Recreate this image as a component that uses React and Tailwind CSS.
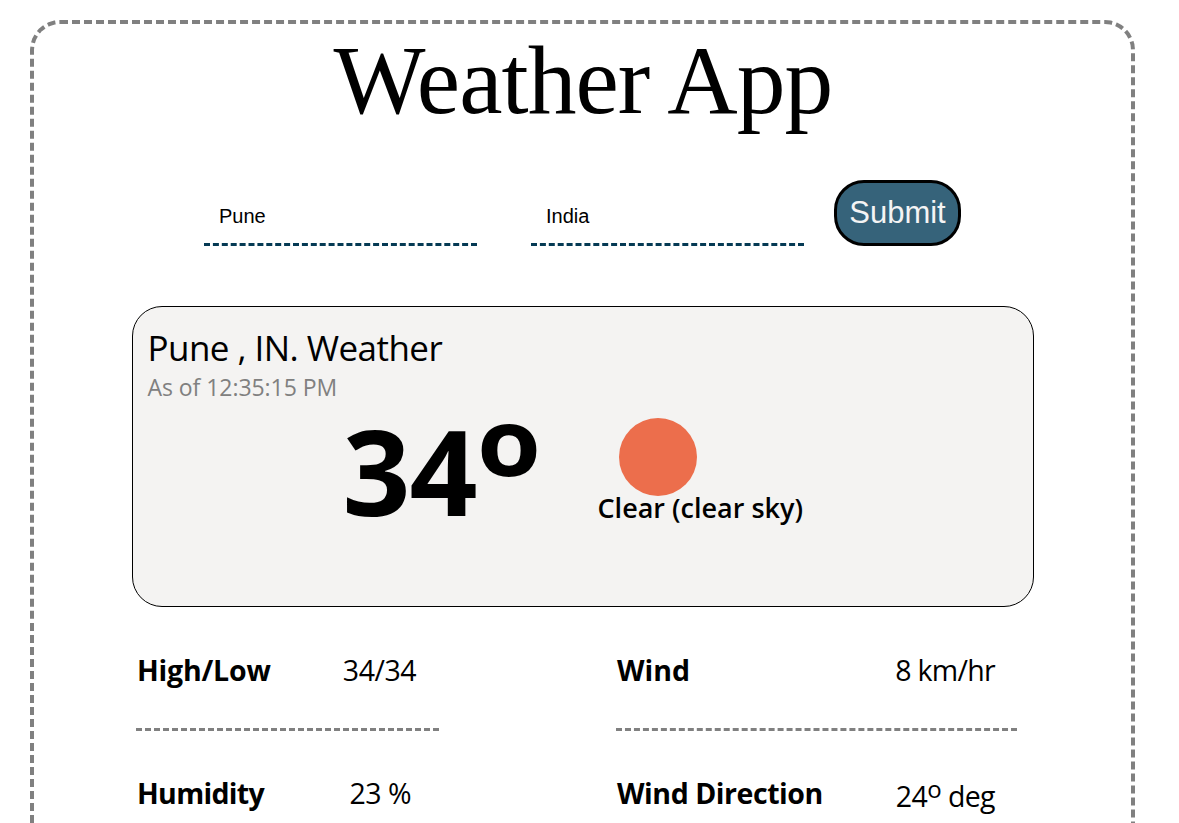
const sans = "font-['Open_Sans',sans-serif]";

function Field({ value, label }) {
  return (
    <input
      type="text"
      aria-label={label}
      defaultValue={value}
      className="h-[60px] w-[273px] border-b-3 border-dashed border-[#053a54] px-[15px] pt-[3px] font-['Liberation_Sans',sans-serif] text-[20px] outline-none"
    />
  );
}

function Stat({ label, children, className, labelClass, valueClass }) {
  return (
    <div className={`flex h-[123px] justify-between border-b-3 border-dashed border-[#808080] ${className}`}>
      <span className={`pt-[42px] pl-px text-[28.5px] leading-[40px] font-bold whitespace-nowrap ${labelClass}`}>{label}</span>
      <span className={`text-[28.5px] leading-[40px] font-normal whitespace-nowrap ${valueClass}`}>{children}</span>
    </div>
  );
}

export default function App() {
  return (
    <div className="h-[823px] w-[1179px] overflow-hidden bg-white pt-[20px] pl-[30px] text-black">
      <main className="flex h-[1100px] w-[1105px] flex-col items-center rounded-[30px] border-4 border-dashed border-[#808080]">
        <h1 className="mt-px mb-px pl-px font-['Liberation_Serif',serif] text-[97.5px] leading-[110px] tracking-[-0.95px]">Weather App</h1>

        <form className="mt-[44px] flex h-[66px] w-full items-end pl-[170px]">
          <Field value="Pune" label="City" />
          <div className="w-[54px]" />
          <Field value="India" label="Country" />
          <button
            type="button"
            className="ml-[30px] h-[66px] w-[127px] rounded-[30px] border-3 border-black bg-[#36637a] font-['Liberation_Sans',sans-serif] text-[31px] text-[#f4f4f4]"
          >
            Submit
          </button>
        </form>

        <section className={`mt-[60px] h-[301px] w-[902px] rounded-[30px] border border-black bg-[#f4f3f2] pl-[15px] ${sans}`}>
          <h2 className="mt-[18px] text-[35px] leading-[46px] font-normal tracking-[-0.55px]">Pune , IN. Weather</h2>
          <p className="text-[23px] leading-[32px] tracking-[-0.05px] text-[#808080]">As of 12:35:15 PM</p>
          <div className="flex">
            <div className="ml-[195px] flex w-[255px] text-[119px] leading-[120px] font-bold">
              <span className="mt-[7px] tracking-[-1px]">34</span>
              <span className="mt-[-23px] origin-left scale-x-110 text-[94px]">o</span>
            </div>
            <div className="pt-[15px]">
              <div className="ml-[21px] size-[78px] rounded-full bg-[#ec6e4c]" />
              <p className="mt-[-6px] text-[27px] leading-[36px] font-semibold whitespace-nowrap">Clear (clear sky)</p>
            </div>
          </div>
        </section>

        <section className={`mt-px flex w-full pl-[102px] ${sans}`}>
          <div className="w-[303px]">
            <Stat label="High/Low" className="pr-[23px]" labelClass="tracking-[-0.2px]" valueClass="pt-[42px] tracking-[-0.5px]">34/34</Stat>
            <Stat label="Humidity" className="pr-[28px]" labelClass="tracking-[-0.7px]" valueClass="pt-[42px] tracking-[-0.5px]">23 %</Stat>
          </div>
          <div className="ml-[177px] w-[401px]">
            <Stat label="Wind" className="pr-[22px]" labelClass="" valueClass="pt-[42px] tracking-[-0.7px]">8 km/hr</Stat>
            <Stat label="Wind Direction" className="pr-[22px]" labelClass="tracking-[-0.45px]" valueClass="pt-[45px] tracking-[-0.6px]">
              24<sup className="top-[-9px] text-[24px]">o</sup> deg
            </Stat>
          </div>
        </section>
      </main>
    </div>
  );
}
